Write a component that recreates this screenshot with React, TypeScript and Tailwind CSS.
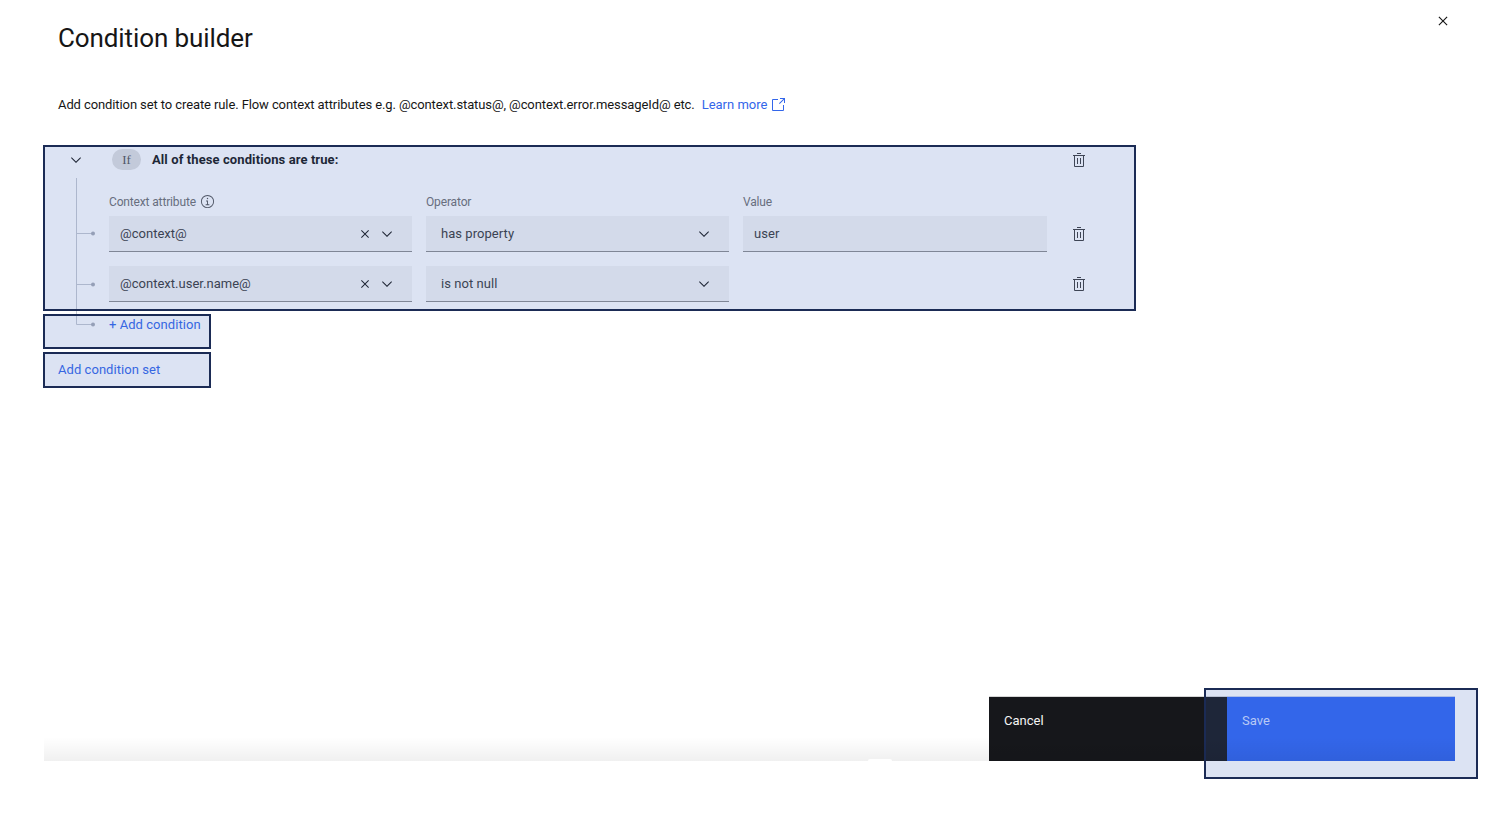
const font = "font-['Roboto',sans-serif]";

function Glyph({ d, size, className = "" }: { d: string; size: number; className?: string }) {
  return (
    <svg width={size} height={size} viewBox="0 0 32 32" fill="currentColor" className={"shrink-0 " + className}>
      <path d={d} />
    </svg>
  );
}

const TRASH =
  "M12 12h2v12h-2zM18 12h2v12h-2zM4 6v2h2v20a2 2 0 0 0 2 2h16a2 2 0 0 0 2-2V8h2V6zm4 22V8h16v20zM12 2h8v2h-8z";
const CLOSE =
  "M17.4141 16 24 9.4141 22.5859 8 16 14.5859 9.4143 8 8 9.4141 14.5859 16 8 22.5859 9.4143 24 16 17.4141 22.5859 24 24 22.5859 17.4141 16z";
const CHEVRON = "M16 22 6 12l1.4-1.4 8.6 8.6 8.6-8.6L26 12z";
const LAUNCH =
  "M26 28H6a2.0027 2.0027 0 0 1-2-2V6a2.0027 2.0027 0 0 1 2-2h10v2H6v20h20V16h2v10a2.0027 2.0027 0 0 1-2 2ZM20 2v2h6.586L18 12.586 19.414 14 28 5.414V12h2V2H20z";
const INFO =
  "M17 22v-8h-4v2h2v6h-3v2h8v-2h-3zM16 8a1.5 1.5 0 1 0 1.5 1.5A1.5 1.5 0 0 0 16 8zM16 30a14 14 0 1 1 14-14 14 14 0 0 1-14 14Zm0-26a12 12 0 1 0 12 12A12 12 0 0 0 16 4Z";

function ComboField({ value }: { value: string }) {
  return (
    <div className="flex h-9 w-[303px] items-center border-b border-[#8d8d8d] bg-[#f4f4f4] pl-[11px] pr-[17px] text-[13px] tracking-[0.02px] text-[#393939]">
      <span className="flex-1">{value}</span>
      <Glyph d={CLOSE} size={16} className="mr-[6px] text-[#161616]" />
      <Glyph d={CHEVRON} size={16} className="text-[#161616]" />
    </div>
  );
}

function SelectField({ value }: { value: string }) {
  return (
    <div className="flex h-9 w-[303px] items-center border-b border-[#8d8d8d] bg-[#f4f4f4] pl-[15px] pr-[17px] text-[13px] tracking-[0.05px] text-[#393939]">
      <span className="flex-1">{value}</span>
      <Glyph d={CHEVRON} size={16} className="text-[#161616]" />
    </div>
  );
}

function Row({ a, b, c }: { a: string; b: string; c?: string }) {
  return (
    <div className="flex h-9 items-center gap-[14px]">
      <ComboField value={a} />
      <SelectField value={b} />
      {c ? (
        <div className="flex h-9 w-[304px] items-center border-b border-[#8d8d8d] bg-[#f4f4f4] pl-[11px] text-[13px] tracking-[0.05px] text-[#393939]">
          {c}
        </div>
      ) : (
        <div className="w-[304px]" />
      )}
      <Glyph d={TRASH} size={16} className="ml-[10px] text-[#3d3d3d]" />
    </div>
  );
}

export default function App() {
  return (
    <div className={"relative flex h-[820px] w-full flex-col overflow-hidden bg-white " + font}>
      <header className="flex items-start justify-between pl-[58px] pr-[44px]">
        <h1 className="pt-[19px] text-[26px] leading-[38px] tracking-[-0.1px] text-[#161616]">Condition builder</h1>
        <Glyph d={CLOSE} size={18} className="mt-[12px] text-[#161616]" />
      </header>

      <p className="mt-[38px] flex h-5 items-center pl-[58px] text-[13px] tracking-[-0.1px] text-[#161616]">
        Add condition set to create rule. Flow context attributes e.g. @context.status@, @context.error.messageId@ etc.
        <span className="ml-[7px] flex items-center tracking-normal text-[#3366ea]">
          Learn more
          <Glyph d={LAUNCH} size={16} className="ml-[3px]" />
        </span>
      </p>

      <section className="relative mt-[34px] pl-[45px]">
        <svg width="30" height="150" className="absolute left-[70px] top-[29px]" fill="none">
          <path d="M6.5 0V146.5H22M6.5 55.5H22M6.5 106.5H22" stroke="#c6c9d0" />
          <circle cx="23" cy="55.5" r="2" fill="#a8acb5" />
          <circle cx="23" cy="106.5" r="2" fill="#a8acb5" />
          <circle cx="23" cy="146.5" r="2" fill="#a8acb5" />
        </svg>

        <div className="flex h-[21px] items-center">
          <Glyph d={CHEVRON} size={16} className="ml-[23px] text-[#161616]" />
          <span className="ml-[28px] flex h-[21px] w-[29px] items-center justify-center rounded-full bg-[#e0e0e0] font-['Liberation_Serif',serif] text-[13px] text-[#525252]">
            If
          </span>
          <span className="ml-[11px] w-[919px] text-[13px] font-bold tracking-[0.1px] text-[#161616]">
            All of these conditions are true:
          </span>
          <Glyph d={TRASH} size={16} className="text-[#3d3d3d]" />
        </div>

        <div className="ml-[64px] mt-[22px] flex h-[19px] items-center text-[12px] tracking-[-0.15px] text-[#6f6f6f]">
          <span className="flex w-[317px] items-center gap-[4px]">
            Context attribute
            <Glyph d={INFO} size={15} className="text-[#525252]" />
          </span>
          <span className="w-[317px]">Operator</span>
          <span>Value</span>
        </div>

        <div className="ml-[64px] mt-[5px] flex flex-col gap-[14px]">
          <Row a="@context@" b="has property" c="user" />
          <Row a="@context.user.name@" b="is not null" />
        </div>

        <div className="ml-[64px] mt-[13px] h-5 text-[13px] leading-5 tracking-[0.05px] text-[#3366ea]">+ Add condition</div>
        <div className="ml-[13px] mt-[25px] h-5 text-[13px] leading-5 tracking-[0.05px] text-[#3366ea]">Add condition set</div>
      </section>

      <footer className="relative ml-[44px] mr-[41px] mt-auto mb-[59px] flex h-[64px] justify-end text-[13px]">
        <div className="w-[238px] bg-[#16171b] px-[15px] py-[14px] text-[#f4f4f4] shadow-[0_-1px_0_#d6d6d6]">Cancel</div>
        <div className="relative z-20 w-[228px] bg-[#3366ea] px-[15px] py-[14px] text-[#b8c9f5] shadow-[0_-1px_0_#aebfe8]">Save</div>
        <div className="pointer-events-none absolute inset-x-0 bottom-0 z-30 h-[24px] bg-gradient-to-b from-transparent to-[#0000000f]" />
        <div className="absolute bottom-0 left-[824px] z-30 h-[2px] w-[24px] rounded-t-[3px] bg-white" />
      </footer>

      <div className="pointer-events-none absolute left-[43px] top-[145px] z-10 h-[166px] w-[1093px] border-2 border-[#1b2b55] bg-[rgba(70,105,190,0.19)]" />
      <div className="pointer-events-none absolute left-[43px] top-[314px] z-10 h-[35px] w-[168px] border-2 border-[#1b2b55] bg-[rgba(70,105,190,0.19)]" />
      <div className="pointer-events-none absolute left-[43px] top-[352px] z-10 h-[36px] w-[168px] border-2 border-[#1b2b55] bg-[rgba(70,105,190,0.19)]" />
      <div className="pointer-events-none absolute left-[1204px] top-[688px] z-10 h-[91px] w-[274px] border-2 border-[#1b2b55] bg-[rgba(70,105,190,0.19)]" />
    </div>
  );
}
